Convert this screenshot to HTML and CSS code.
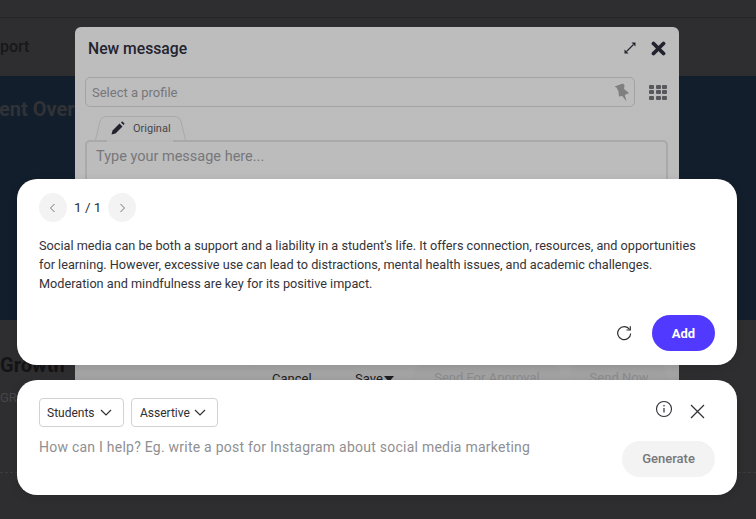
FILE: index.html
```html
<!DOCTYPE html>
<html lang="en">
<head>
    <meta charset="UTF-8">
    <meta name="viewport" content="width=device-width, initial-scale=1.0">
    <title>New message</title>
    <link rel="stylesheet" href="styles.css">
</head>
<body>

<!-- Page behind the overlay -->
<div class="page">
    <div class="topbar"></div>
    <div class="navbar"><span class="nav-link">port</span></div>
    <div class="hero"><h1>ent Overv</h1></div>
    <div class="section">
        <h2>Growth</h2>
        <p>GRO</p>
        <div class="dash"></div>
    </div>
</div>

<!-- Composer dialog -->
<div class="composer">
    <div class="composer-head">
        <h3>New message</h3>
        <svg class="icon-expand" width="14" height="14" viewBox="0 0 14 14"><path d="M3.500 10.500l7-7" stroke="#23232f" stroke-width="1.100"/><path d="M8.500 1.500h4v4zM1.500 8.500v4h4z" fill="#23232f"/></svg>
        <svg class="icon-cross" width="15" height="15" viewBox="0 0 15 15"><path d="M2.500 2.500l10 10M12.500 2.500l-10 10" stroke="#23232f" stroke-width="3.800" stroke-linecap="round"/></svg>
    </div>
    <div class="profile-row">
        <div class="profile-input">
            <span>Select a profile</span>
            <svg width="17" height="19" viewBox="0 0 17 19"><path d="M0.500 3.500L9 0.500 10.500 2.500 10 6 15 10 10.800 12 12.500 18.500 8.300 13 5 13.500 4.500 8.500 2.500 4.500z" fill="#7f7f80"/></svg>
        </div>
        <div class="grid-icon"><i></i><i></i><i></i><i></i><i></i><i></i><i></i><i></i><i></i></div>
    </div>
    <div class="tab">
        <svg class="tab-shape" width="91" height="25" viewBox="0 0 91 25"><path d="M0.500 24L5 5.500Q6.500 0.500 11.500 0.500H79.500Q84.500 0.500 86 5.500L90.500 24" fill="#bcbcbd" stroke="#a9a9aa"/></svg>
        <svg class="tab-pencil" width="14" height="14" viewBox="0 0 14 14"><path d="M0.500 13.500l1-4 7-7 3 3-7 7zM10 1.500l1.200-1.200 2.500 2.500L12.500 4z" fill="#23232f"/></svg>
        <span class="tab-label">Original</span>
    </div>
    <div class="message-box">Type your message here...</div>
    <div class="composer-foot">
        <span class="foot-link">Cancel</span>
        <span class="foot-link foot-save">Save<i class="caret"></i></span>
        <span class="foot-btn btn-approval">Send For Approval</span>
        <span class="foot-btn btn-send">Send Now</span>
    </div>
</div>

<!-- AI result card -->
<div class="card result-card">
    <div class="pager">
        <span class="round-btn"><svg width="10" height="10" viewBox="0 0 10 10"><path d="M6.500 1L2.500 5l4 4" fill="none" stroke="#666669" stroke-width="0.900"/></svg></span>
        <span class="pager-text">1 / 1</span>
        <span class="round-btn"><svg width="10" height="10" viewBox="0 0 10 10"><path d="M3.500 1l4 4-4 4" fill="none" stroke="#666669" stroke-width="0.900"/></svg></span>
    </div>
    <p class="result-text">Social media can be both a support and a liability in a student's life. It offers connection, resources, and opportunities for learning. However, excessive use can lead to distractions, mental health issues, and academic challenges. Moderation and mindfulness are key for its positive impact.</p>
    <div class="result-actions">
        <svg width="16" height="16" viewBox="0 0 16 16"><path d="M13.600 4.500A6.500 6.500 0 1 0 14.700 8.500" fill="none" stroke="#2e2e33" stroke-width="1.200"/><path d="M14.300 1.200v3.800h-3.800" fill="none" stroke="#2e2e33" stroke-width="1.200"/></svg>
        <button class="btn-add">Add</button>
    </div>
</div>

<!-- AI prompt card -->
<div class="card prompt-card">
    <div class="prompt-main">
        <div class="selects">
            <span class="select select-students">Students<svg width="12" height="7" viewBox="0 0 12 7"><path d="M1 1l5 5 5-5" fill="none" stroke="#2e2e33" stroke-width="1.200"/></svg></span>
            <span class="select select-tone">Assertive<svg width="12" height="7" viewBox="0 0 12 7"><path d="M1 1l5 5 5-5" fill="none" stroke="#2e2e33" stroke-width="1.200"/></svg></span>
        </div>
        <div class="prompt-hint">How can I help? Eg. write a post for Instagram about social media marketing</div>
    </div>
    <div class="prompt-side">
        <div class="prompt-icons">
            <svg class="icon-info" width="18" height="18" viewBox="0 0 18 18"><circle cx="9" cy="9" r="7.500" fill="none" stroke="#2e2e33" stroke-width="1.100"/><path d="M9 8v4.500" stroke="#2e2e33" stroke-width="1.200"/><circle cx="9" cy="5.700" r="0.800" fill="#2e2e33"/></svg>
            <svg class="icon-close" width="15" height="15" viewBox="0 0 15 15"><path d="M1 1l13 13M14 1L1 14" stroke="#2e2e33" stroke-width="1.200"/></svg>
        </div>
        <button class="btn-generate">Generate</button>
    </div>
</div>

</body>
</html>
```

FILE: styles.css
```css
body {
    font-family: Roboto, Arial, sans-serif;
    background-color: #2e2e30;
    margin: 0;
    padding: 0;
    width: 756px;
    height: 519px;
    overflow: hidden;
    position: relative;
}
.topbar {
    height: 17px;
    border-bottom: 1px solid #262628;
}
.navbar {
    height: 58px;
    box-sizing: border-box;
    padding-top: 19px;
}
.nav-link {
    color: #17171a;
    font-size: 16px;
    font-weight: 500;
}
.hero {
    height: 244px;
    background-color: #121e2b;
    overflow: hidden;
}
.hero h1 {
    margin: 20px 0 0 -1px;
    color: #303236;
    font-size: 20px;
    line-height: 26px;
    font-weight: 700;
    white-space: nowrap;
}
.section {
    padding-top: 33px;
}
.section h2 {
    margin: 0;
    font-size: 20px;
    line-height: 24px;
    font-weight: 700;
    color: #141416;
}
.section p {
    margin: 13px 0 0;
    font-size: 13px;
    color: #464648;
}
.dash {
    margin-top: 67px;
    border-top: 1px dashed #3c3c3e;
}
.composer {
    position: absolute;
    left: 75px;
    top: 27px;
    width: 604px;
    height: 380px;
    box-sizing: border-box;
    padding: 0 10px;
    border-radius: 6px;
    background: linear-gradient(to bottom, #bdbdbe 0, #bcbcbd 40%, #a6a6a7 88%, #9f9fa0 100%);
}
.composer-head {
    display: flex;
    align-items: center;
    height: 42px;
    padding: 0 3px;
}
.composer-head h3 {
    flex: 1;
    margin: 0;
    font-size: 15.700px;
    font-weight: 500;
    color: #23232f;
}
.icon-expand {
    margin-right: 14px;
}
.profile-row {
    display: flex;
    align-items: center;
    margin-top: 8px;
}
.profile-input {
    flex: 1;
    height: 28px;
    display: flex;
    align-items: center;
    justify-content: space-between;
    padding: 0 3px 0 6px;
    border: 1px solid #a3a3a4;
    border-radius: 5px;
    color: #77777a;
    font-size: 13px;
}
.grid-icon {
    display: grid;
    grid-template-columns: repeat(3, 5px);
    grid-auto-rows: 4px;
    gap: 1.500px;
    margin-left: 14px;
    margin-right: 2px;
}
.grid-icon i {
    background-color: #57575c;
    border-radius: 1px;
}
.tab {
    position: relative;
    z-index: 1;
    display: flex;
    align-items: center;
    gap: 8px;
    width: 91px;
    height: 24px;
    box-sizing: border-box;
    margin: 9px 0 0 10px;
    padding-left: 16px;
    font-size: 11px;
    color: #47474b;
}
.tab-shape {
    position: absolute;
    left: 0;
    top: 0;
}
.tab-shape path {
    stroke-linejoin: round;
}
.tab::after {
    content: "";
    position: absolute;
    left: 12px;
    right: 13px;
    bottom: -2px;
    height: 2px;
    background-color: #b8b8b9;
}
.tab-pencil, .tab-label {
    position: relative;
}
.message-box {
    height: 200px;
    box-sizing: border-box;
    margin-right: 1px;
    padding: 6px 9px;
    border: 2px solid #a9a9aa;
    border-radius: 5px;
    color: #77777a;
    font-size: 14.500px;
}
.composer-foot {
    position: absolute;
    left: 197px;
    top: 335px;
    display: flex;
    align-items: center;
    font-size: 13px;
    color: #1d1d22;
}
.foot-link {
    width: 39px;
    margin-right: 44px;
    white-space: nowrap;
}
.foot-save {
    margin-right: 19px;
}
.caret {
    display: inline-block;
    border: 5px solid transparent;
    border-top: 6px solid #1d1d22;
    border-bottom: 0;
    margin-left: 1px;
    vertical-align: 1px;
}
.foot-btn {
    margin-right: 9px;
    text-align: center;
    line-height: 32px;
    border-radius: 16px;
    background-color: #a2a2a3;
    color: #8b8b8c;
}
.btn-approval {
    width: 148px;
}
.btn-send {
    width: 98px;
}
.card {
    position: absolute;
    left: 17px;
    width: 720px;
    box-sizing: border-box;
    border-radius: 20px;
    background-color: #fff;
    box-shadow: 0 2px 8px rgba(0, 0, 0, 0.12);
}
.result-card {
    top: 179px;
    height: 186px;
    padding: 14px 22px 14px;
}
.pager {
    display: flex;
    align-items: center;
    gap: 7px;
}
.round-btn {
    display: flex;
    align-items: center;
    justify-content: center;
    width: 28px;
    height: 29px;
    border-radius: 50%;
    background-color: #f3f3f3;
}
.pager-text {
    font-size: 13.500px;
    line-height: 29px;
    color: #2e2e33;
}
.result-text {
    max-width: 665px;
    margin: 14px 0 0;
    font-size: 12.700px;
    line-height: 19px;
    color: #333338;
}
.result-actions {
    display: flex;
    justify-content: flex-end;
    align-items: center;
    gap: 20px;
    margin-top: 22px;
}
.btn-add {
    width: 63px;
    height: 36px;
    border: 0;
    border-radius: 18px;
    background-color: #5239ff;
    color: #fff;
    font-family: inherit;
    font-size: 13px;
    font-weight: 700;
}
.prompt-card {
    top: 380px;
    height: 115px;
    padding: 18px 22px 18px;
    display: flex;
    justify-content: space-between;
}
.selects {
    display: flex;
    gap: 7px;
}
.select {
    display: flex;
    align-items: center;
    justify-content: space-between;
    height: 29px;
    box-sizing: border-box;
    padding: 0 11px 0 7px;
    border: 1px solid #d2d2d4;
    border-radius: 4px;
    font-size: 12px;
    color: #2e2e33;
}
.select-students {
    width: 85px;
}
.select-tone {
    width: 87px;
    padding-left: 8px;
}
.prompt-hint {
    margin-top: 12px;
    font-size: 14px;
    letter-spacing: 0.24px;
    color: #8f8f92;
}
.prompt-side {
    display: flex;
    flex-direction: column;
    align-items: flex-end;
    justify-content: space-between;
}
.prompt-icons {
    display: flex;
    align-items: flex-start;
    gap: 17px;
    margin-right: 10px;
    margin-top: 2px;
}
.icon-close {
    margin-top: 4px;
}
.btn-generate {
    width: 93px;
    height: 36px;
    padding-bottom: 3px;
    border: 0;
    border-radius: 18px;
    background-color: #f3f3f3;
    color: #77777a;
    font-family: inherit;
    font-size: 13px;
    font-weight: 500;
}
```
